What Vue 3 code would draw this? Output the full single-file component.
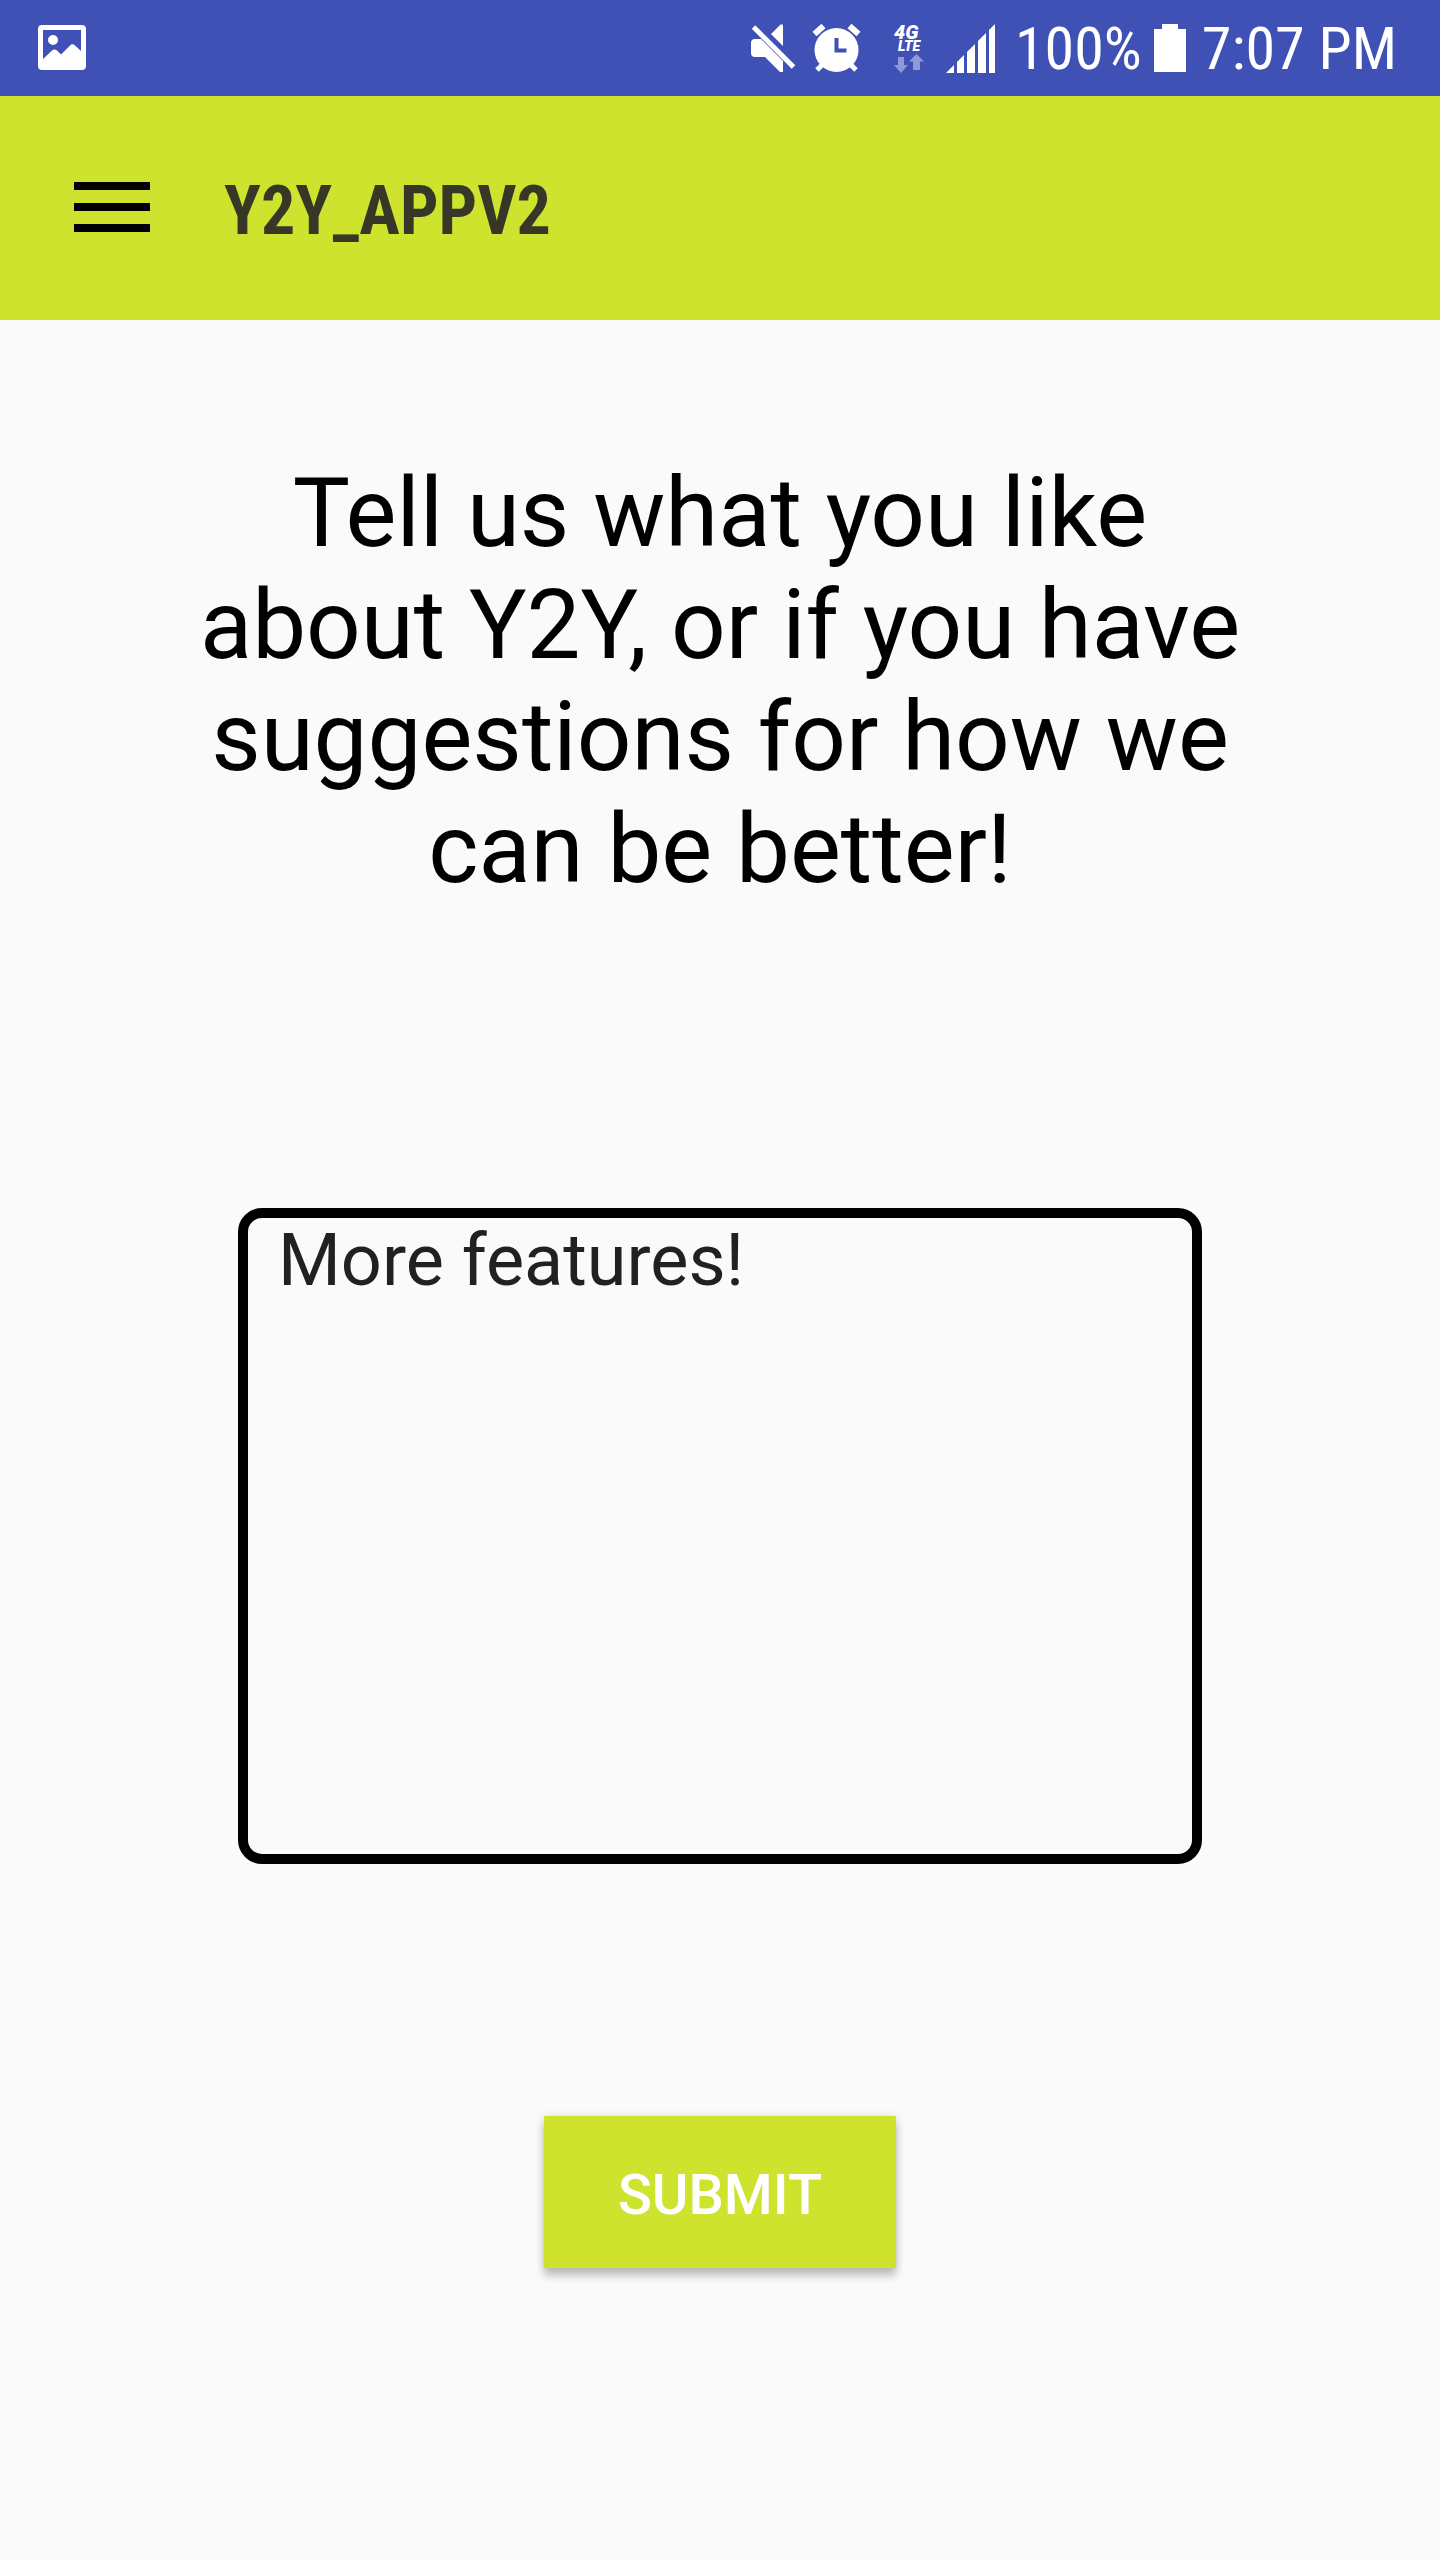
<script setup>
import { ref } from 'vue'

const title = 'Y2Y_APPV2'
const feedback = ref('More features!')
const bars = [
  '0,49 8,41 8,49',
  '11,49 11,38 18,31 18,49',
  '21,49 21,28 29,20 29,49',
  '32,49 32,17 40,9 40,49',
  '43,49 43,6 49,0 49,49'
]
</script>

<template>
  <div class="screen">
    <div class="status-bar">
      <svg class="picture" width="48" height="46" viewBox="0 0 48 46" aria-hidden="true">
        <path fill="#fff" fill-rule="evenodd" d="M4 0H44Q48 0 48 4V41Q48 45 44 45H4Q0 45 0 41V4Q0 0 4 0ZM5 5V34L14 25.500Q16.500 23.500 19 25.500L23 29.500L32 20.500Q34.500 18 37 20.500L43 26V5ZM15 10A5 5 0 1 1 15 20A5 5 0 1 1 15 10Z" />
      </svg>
      <div class="indicators">
        <svg class="mute" width="45" height="49" viewBox="0 0 45 49" aria-hidden="true">
          <path fill="#fff" d="M4 15H10L32 37V48H29L14 33H4Q0 33 0 29V19Q0 15 4 15ZM20 10L29 1Q32-1 32 2V22Z" />
          <path stroke="#fff" stroke-width="5" d="M2.500 3L42.500 43" />
        </svg>
        <svg class="alarm" width="47" height="49" viewBox="0 0 47 49" aria-hidden="true">
          <circle cx="23.500" cy="26" r="22" fill="#fff" />
          <path stroke="#fff" stroke-width="6" d="M1.500 10L10.500 2M36.500 2L45.500 10" />
          <path stroke="#fff" stroke-width="5" d="M10 40L4 46M37 40L43 46" />
          <path fill="none" stroke="#3f51b5" stroke-width="4" d="M23.500 14V26.500H33.500" />
        </svg>
        <svg class="network" width="30" height="49" viewBox="0 0 30 49">
          <text class="network-type"><tspan x="0" y="15">4G</tspan><tspan class="network-lte" x="4" y="27">LTE</tspan></text>
          <path fill="#fff" opacity=".42" d="M4 33H10V41H14L7 49L0 41H4ZM22.500 30L30 37.500H26V46H19V37.500H15Z" />
        </svg>
        <svg class="signal" width="49" height="49" viewBox="0 0 49 49" aria-hidden="true">
          <polygon v-for="bar in bars" :key="bar" :points="bar" fill="#fff" />
        </svg>
        <span class="level">100%</span>
        <svg class="battery" width="32" height="48" viewBox="0 0 32 48" aria-hidden="true">
          <path fill="#fff" d="M8 0H24V5H32V48H0V5H8Z" />
        </svg>
        <span class="clock">7:07 PM</span>
      </div>
    </div>

    <header class="app-bar">
      <button class="menu" type="button" aria-label="Open menu">
        <svg width="76" height="50" viewBox="0 0 76 50" aria-hidden="true">
          <path d="M0 0H76V8H0ZM0 21H76V29H0ZM0 42H76V50H0Z" />
        </svg>
      </button>
      <h1>{{ title }}</h1>
    </header>

    <form class="feedback" @submit.prevent>
      <label for="feedback-text">Tell us what you like about Y2Y, or if you have suggestions for how we can be better!</label>
      <textarea id="feedback-text" v-model="feedback" spellcheck="false"></textarea>
      <button class="submit" type="submit">SUBMIT</button>
    </form>
  </div>
</template>

<style>
body {
  margin: 0;
  background: #fafafa;
}
</style>

<style scoped>
.screen {
  display: flex;
  flex-direction: column;
  min-height: 100vh;
  background: #fafafa;
  font-family: Roboto, "Liberation Sans", sans-serif;
}

.screen svg {
  display: block;
  flex: none;
  overflow: visible;
}

.status-bar {
  display: flex;
  align-items: center;
  justify-content: space-between;
  height: 96px;
  padding: 0 43px 0 38px;
  background: #3f51b5;
  color: #fff;
  font-family: "Roboto Condensed", Roboto, "Liberation Sans", sans-serif;
  font-size: 60px;
  line-height: 72px;
  white-space: nowrap;
}

.indicators {
  display: flex;
  align-items: center;
}

.alarm {
  margin-left: 17px;
}

.network {
  margin-left: 34px;
}

.signal {
  margin-left: 22px;
}

.level {
  margin-left: 20px;
}

.level,
.clock {
  padding-top: 2px;
}

.battery {
  margin: 0 16px 0 12px;
}

.network-type {
  fill: #fff;
  font-family: Roboto, "Liberation Sans", sans-serif;
  font-size: 20px;
  font-style: italic;
  font-weight: 900;
}

.network-lte {
  font-size: 14px;
}

.app-bar {
  display: flex;
  align-items: center;
  gap: 74px;
  height: 224px;
  padding: 0 74px;
  background: #cde32d;
}

.menu {
  padding: 0 0 2px;
  border: 0;
  background: none;
}

h1 {
  margin: 0;
  padding-top: 6px;
  color: #373727;
  font-family: "Roboto Condensed", Roboto, "Liberation Sans", sans-serif;
  font-size: 68px;
  font-weight: 700;
  line-height: 80px;
}

.feedback {
  display: flex;
  flex-direction: column;
  align-items: center;
  padding: 137px 180px;
}

label {
  color: #000;
  font-size: 96px;
  line-height: 112px;
  text-align: center;
}

textarea {
  box-sizing: border-box;
  width: calc(100% - 116px);
  height: 656px;
  margin: 303px 0 252px;
  padding: 0 30px;
  border: 10px solid #000;
  border-radius: 24px;
  outline: 0;
  background: transparent;
  color: #212121;
  font-family: inherit;
  font-size: 72px;
  line-height: 86px;
  resize: none;
}

.submit {
  height: 152px;
  padding: 6px 74px 0;
  border: 0;
  background: #cde32d;
  box-shadow: 0 8px 8px rgba(0, 0, 0, 0.22), 0 0 8px rgba(0, 0, 0, 0.12);
  color: #fff;
  font-family: inherit;
  font-size: 56px;
  font-weight: 500;
  line-height: 64px;
}
</style>
